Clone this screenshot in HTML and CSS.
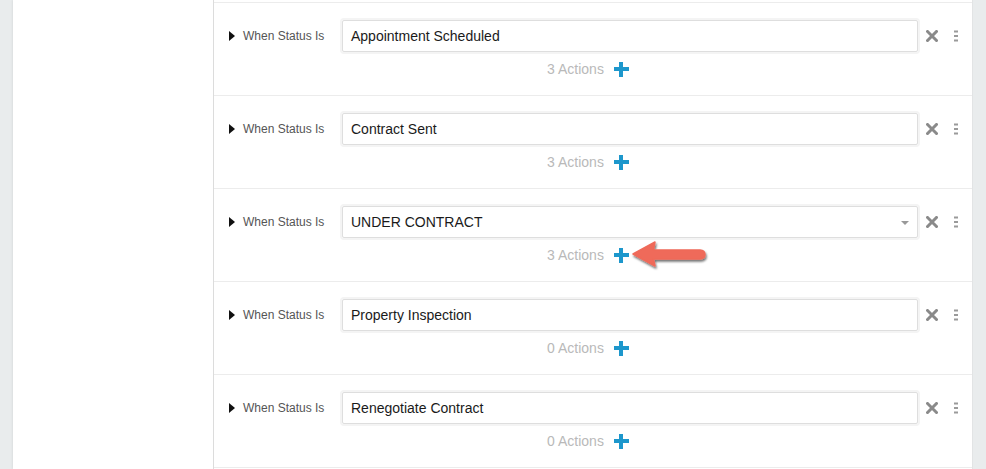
FILE: index.html
```html
<!DOCTYPE html>
<html>
<head>
<meta charset="utf-8">
<link rel="stylesheet" href="styles.css">
</head>
<body>
<div class="page">
  <aside class="sidebar"></aside>
  <main class="content">
    <div class="row">
      <div class="rule">
        <span class="caret"></span>
        <span class="label">When Status Is</span>
        <div class="field">Appointment Scheduled</div>
        <svg class="remove" viewBox="0 0 12 12" width="12" height="12"><path d="M1.5 1.5 L10.5 10.5 M10.5 1.5 L1.5 10.5" stroke="#8a8a8a" stroke-width="3" stroke-linecap="square"/></svg>
        <svg class="kebab" viewBox="0 0 4 12" width="4" height="12"><rect x="0" y="0.5" width="4" height="2" fill="#9a9a9a"/><rect x="0" y="5" width="4" height="2" fill="#9a9a9a"/><rect x="0" y="9.5" width="4" height="2" fill="#9a9a9a"/></svg>
      </div>
      <div class="actions"><span class="count">3 Actions</span><span class="plus"></span></div>
    </div>
    <div class="row">
      <div class="rule">
        <span class="caret"></span>
        <span class="label">When Status Is</span>
        <div class="field">Contract Sent</div>
        <svg class="remove" viewBox="0 0 12 12" width="12" height="12"><path d="M1.5 1.5 L10.5 10.5 M10.5 1.5 L1.5 10.5" stroke="#8a8a8a" stroke-width="3" stroke-linecap="square"/></svg>
        <svg class="kebab" viewBox="0 0 4 12" width="4" height="12"><rect x="0" y="0.5" width="4" height="2" fill="#9a9a9a"/><rect x="0" y="5" width="4" height="2" fill="#9a9a9a"/><rect x="0" y="9.5" width="4" height="2" fill="#9a9a9a"/></svg>
      </div>
      <div class="actions"><span class="count">3 Actions</span><span class="plus"></span></div>
    </div>
    <div class="row">
      <div class="rule">
        <span class="caret"></span>
        <span class="label">When Status Is</span>
        <div class="field select">UNDER CONTRACT<span class="dropdown"></span></div>
        <svg class="remove" viewBox="0 0 12 12" width="12" height="12"><path d="M1.5 1.5 L10.5 10.5 M10.5 1.5 L1.5 10.5" stroke="#8a8a8a" stroke-width="3" stroke-linecap="square"/></svg>
        <svg class="kebab" viewBox="0 0 4 12" width="4" height="12"><rect x="0" y="0.5" width="4" height="2" fill="#9a9a9a"/><rect x="0" y="5" width="4" height="2" fill="#9a9a9a"/><rect x="0" y="9.5" width="4" height="2" fill="#9a9a9a"/></svg>
      </div>
      <div class="actions"><span class="count">3 Actions</span><span class="plus"></span>
        <svg class="arrow" viewBox="0 0 80 34" width="80" height="34">
          <defs>
            <filter id="sh" x="-20%" y="-40%" width="140%" height="180%">
              <feDropShadow dx="1" dy="2" stdDeviation="1.3" flood-color="#000" flood-opacity="0.55"/>
            </filter>
          </defs>
          <g filter="url(#sh)">
            <path d="M2 15 L24 3 L22.5 11 L69 11 Q74 11.5 74 15.5 Q74 19.5 69 20 L22.5 20 L24 27 Z" fill="#ef6a5a" stroke="#ef6a5a" stroke-width="1.5" stroke-linejoin="round"/>
          </g>
        </svg>
      </div>
    </div>
    <div class="row">
      <div class="rule">
        <span class="caret"></span>
        <span class="label">When Status Is</span>
        <div class="field">Property Inspection</div>
        <svg class="remove" viewBox="0 0 12 12" width="12" height="12"><path d="M1.5 1.5 L10.5 10.5 M10.5 1.5 L1.5 10.5" stroke="#8a8a8a" stroke-width="3" stroke-linecap="square"/></svg>
        <svg class="kebab" viewBox="0 0 4 12" width="4" height="12"><rect x="0" y="0.5" width="4" height="2" fill="#9a9a9a"/><rect x="0" y="5" width="4" height="2" fill="#9a9a9a"/><rect x="0" y="9.5" width="4" height="2" fill="#9a9a9a"/></svg>
      </div>
      <div class="actions"><span class="count">0 Actions</span><span class="plus"></span></div>
    </div>
    <div class="row">
      <div class="rule">
        <span class="caret"></span>
        <span class="label">When Status Is</span>
        <div class="field">Renegotiate Contract</div>
        <svg class="remove" viewBox="0 0 12 12" width="12" height="12"><path d="M1.5 1.5 L10.5 10.5 M10.5 1.5 L1.5 10.5" stroke="#8a8a8a" stroke-width="3" stroke-linecap="square"/></svg>
        <svg class="kebab" viewBox="0 0 4 12" width="4" height="12"><rect x="0" y="0.5" width="4" height="2" fill="#9a9a9a"/><rect x="0" y="5" width="4" height="2" fill="#9a9a9a"/><rect x="0" y="9.5" width="4" height="2" fill="#9a9a9a"/></svg>
      </div>
      <div class="actions"><span class="count">0 Actions</span><span class="plus"></span></div>
    </div>
    <div class="row-end"></div>
  </main>
</div>
</body>
</html>
```

FILE: styles.css
```css
* { box-sizing: border-box; }
html, body {
  margin: 0;
  padding: 0;
  height: 469px;
  overflow: hidden;
  background: #e9eced;
  font-family: "Liberation Sans", Arial, sans-serif;
}
.page {
  display: flex;
  height: 469px;
  padding-left: 13px;
  padding-right: 13px;
}
.sidebar {
  width: 201px;
  flex: none;
  background: #fff;
  border-right: 1px solid #dcdcdc;
  box-shadow: -1px 0 2px rgba(0,0,0,0.06);
}
.content {
  flex: 1;
  background: #fff;
  padding-top: 2px;
  border-right: 1px solid #e2e4e5;
}
.row {
  border-top: 1px solid #ececec;
  height: 93px;
  padding: 17px 0 0 0;
}
.row-end {
  border-top: 1px solid #ececec;
  height: 1px;
}
.rule {
  display: flex;
  align-items: center;
  height: 32px;
  padding-left: 15px;
}
.caret {
  width: 0;
  height: 0;
  border-top: 5px solid transparent;
  border-bottom: 5px solid transparent;
  border-left: 6px solid #111;
  margin-right: 8px;
}
.label {
  font-size: 12px;
  color: #555;
  width: 99px;
  flex: none;
}
.field {
  width: 576px;
  height: 32px;
  flex: none;
  border: 1px solid #dedede;
  border-radius: 2px;
  box-shadow: 0 0 0 2px #f4f4f4;
  padding-left: 8px;
  display: flex;
  align-items: center;
  font-size: 14px;
  color: #1a1a1a;
  position: relative;
}
.dropdown {
  position: absolute;
  right: 8px;
  top: 14px;
  width: 0;
  height: 0;
  border-left: 4px solid transparent;
  border-right: 4px solid transparent;
  border-top: 4px solid #999;
}
.remove {
  margin-left: 8px;
  flex: none;
}
.kebab {
  margin-left: 16px;
  flex: none;
}
.actions {
  display: flex;
  justify-content: center;
  align-items: center;
  height: 20px;
  margin-top: 7px;
  padding-right: 10px;
  position: relative;
}
.count {
  font-size: 14px;
  color: #b9b9b9;
}
.plus {
  position: relative;
  width: 15px;
  height: 15px;
  margin-left: 10px;
}
.plus::before, .plus::after {
  content: "";
  position: absolute;
  background: #1d97cc;
}
.plus::before {
  left: 0;
  top: 5.5px;
  width: 15px;
  height: 4px;
}
.plus::after {
  left: 5.5px;
  top: 0;
  width: 4px;
  height: 15px;
}
.arrow {
  position: absolute;
  left: 417px;
  top: -6px;
}
```
